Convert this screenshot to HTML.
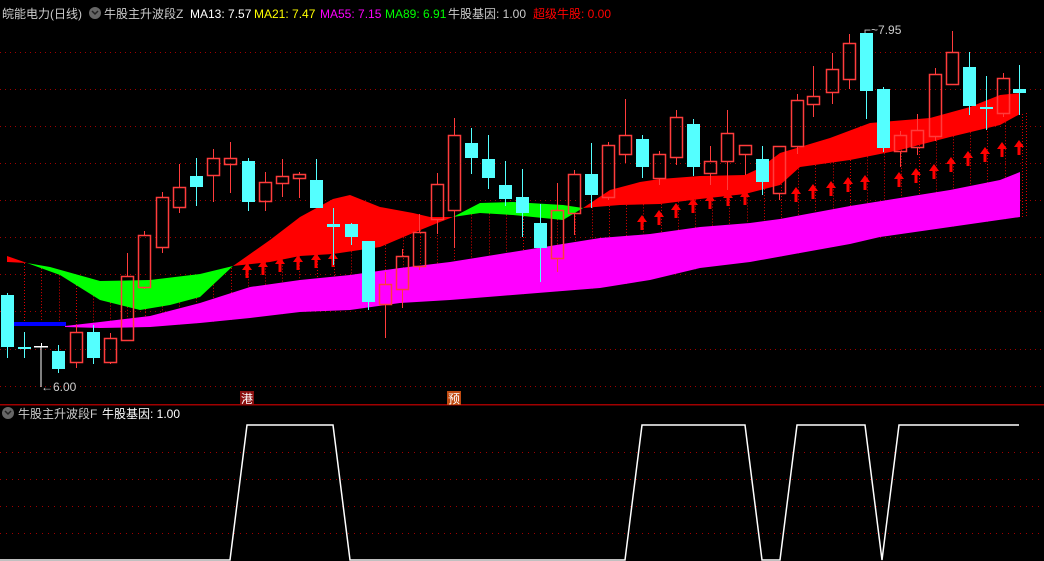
<!DOCTYPE html>
<html><head><meta charset="utf-8"><style>
html,body{margin:0;padding:0;background:#000;width:1044px;height:561px;overflow:hidden}
svg{position:absolute;left:0;top:0}
.t{font-family:"Liberation Sans","Noto Sans CJK SC",sans-serif;font-size:12px}
</style></head><body>
<svg id="s" width="1044" height="561" xmlns="http://www.w3.org/2000/svg">
<g id="grid"></g>
<g id="vd"></g>
<g id="bands"></g>
<g id="arrows"></g>
<g id="candles"></g>
<g id="low"></g>
<rect x="0" y="404" width="1044" height="1.5" fill="#a00000"/>
<rect x="240" y="391" width="14" height="14" fill="#8b1010"/>
<text x="241" y="403" class="t" fill="#fff" font-size="12">港</text>
<rect x="447" y="391" width="14" height="14" fill="#c04a10"/>
<text x="448" y="403" class="t" fill="#fff" font-size="12">预</text>
<line x1="41" y1="347" x2="41" y2="387" stroke="#fff" stroke-width="1"/>
<text x="41" y="391" class="t" fill="#ccc" font-size="12">←6.00</text>
<text x="864" y="34" class="t" fill="#ccc" font-size="12">⌐~7.95</text>
<circle cx="95" cy="13" r="6" fill="#666"/><path d="M92 11 L95 14 L98 11" stroke="#222" stroke-width="1.5" fill="none"/>
<text x="2" y="18" class="t" fill="#ccc">皖能电力(日线)</text>
<text x="104" y="18" class="t" fill="#ccc">牛股主升波段Z</text>
<text x="190" y="18" class="t" fill="#fff">MA13: 7.57</text>
<text x="254" y="18" class="t" fill="#ff0">MA21: 7.47</text>
<text x="320" y="18" class="t" fill="#f0f">MA55: 7.15</text>
<text x="385" y="18" class="t" fill="#0f0">MA89: 6.91</text>
<text x="448" y="18" class="t" fill="#ccc">牛股基因: 1.00</text>
<text x="533" y="18" class="t" fill="#f00">超级牛股: 0.00</text>
<circle cx="8" cy="413" r="6" fill="#666"/><path d="M5 411 L8 414 L11 411" stroke="#222" stroke-width="1.5" fill="none"/>
<text x="18" y="418" class="t" fill="#ccc">牛股主升波段F</text>
<text x="102" y="418" class="t" fill="#fff">牛股基因: 1.00</text>
</svg>
<script>
var NS="http://www.w3.org/2000/svg";
function el(g,tag,a){var e=document.createElementNS(NS,tag);for(var k in a)e.setAttribute(k,a[k]);document.getElementById(g).appendChild(e);return e;}
function interp(pts,x){for(var i=0;i<pts.length-1;i++){if(x>=pts[i][0]&&x<=pts[i+1][0]){var t=(x-pts[i][0])/(pts[i+1][0]-pts[i][0]);return pts[i][1]+t*(pts[i+1][1]-pts[i][1]);}}return x<pts[0][0]?pts[0][1]:pts[pts.length-1][1];}
function poly(g,top,bot,fill){var d="M";top.forEach(function(p,i){d+=(i?"L":"")+p[0]+" "+p[1]+" ";});bot.slice().reverse().forEach(function(p){d+="L"+p[0]+" "+p[1]+" ";});d+="Z";el(g,"path",{d:d,fill:fill});}
[52,89,126,163,200,237,274,311,349,386].forEach(function(y){el("grid","line",{x1:0,x2:1044,y1:y+.5,y2:y+.5,stroke:"#a00000","stroke-dasharray":"1 4"});});
[452,479,506,533].forEach(function(y){el("low","line",{x1:0,x2:1044,y1:y+.5,y2:y+.5,stroke:"#a00000","stroke-dasharray":"1 5"});});
var magT=[[65,326],[100,322],[150,316],[200,303],[250,287],[300,280],[350,275],[400,268],[450,262],[500,254],[550,246],[600,238],[650,234],[700,227],[750,223],[780,219],[850,206],[900,198],[950,190],[1000,180],[1020,172]];
var magB=[[65,327],[100,328],[150,327],[200,323],[250,318],[300,312],[350,310],[400,303],[450,300],[500,296],[550,292],[600,288],[650,280],[700,268],[750,262],[800,253],[850,244],[880,237],[950,227],[1020,217]];
var upA=[[27,263],[50,267],[100,281],[150,280],[200,274],[233,266],[270,262],[300,256],[333,254],[380,247],[413,233],[440,222],[453,217],[480,203],[513,202],[563,205],[583,208],[610,190],[640,182],[660,179],[700,176],[745,175],[760,168],[780,153],[830,138],[870,123],[930,118],[970,107],[1000,95],[1020,93]];
var upB=[[27,263],[60,275],[100,300],[140,310],[170,305],[200,297],[233,266],[270,240],[300,217],[333,199],[350,195],[380,207],[413,213],[430,217],[453,217],[480,213],[513,215],[563,220],[583,208],[620,205],[660,204],[700,199],[745,194],[780,185],[800,167],[850,160],[900,150],[950,137],[1000,125],[1020,114]];
for(var i=0;i<60;i++){var x=Math.round(7+i*17.2);if(x<20)continue;var y1=Math.max(interp(upA,x),interp(upB,x));var y2=x<65?325:interp(magB,x);el("vd","line",{x1:x+.5,x2:x+.5,y1:y1,y2:y2,stroke:"#e00000","stroke-dasharray":"1 2"});}
el("vd","line",{x1:1026.5,x2:1026.5,y1:113,y2:217,stroke:"#e00000","stroke-dasharray":"1 2"});
function seg(a,x0,x1){return a.filter(function(p){return p[0]>=x0&&p[0]<=x1;});}
poly("bands",[[7,256],[27,263]],[[7,262],[27,263]],"#f00");
poly("bands",seg(upA,27,233),seg(upB,27,233),"#0f0");
poly("bands",seg(upB,233,453),seg(upA,233,453),"#f00");
poly("bands",seg(upA,453,583),seg(upB,453,583),"#0f0");
poly("bands",seg(upA,583,1020),seg(upB,583,1020),"#f00");
poly("bands",magT,magB,"#f0f");
el("bands","rect",{x:14,y:322,width:52,height:4,fill:"#00f"});
var ar=[[247,263],[263,260],[280,257],[298,255],[316,253],[333,252],[642,215],[659,210],[676,203],[693,198],[710,194],[728,191],[745,190],[796,187],[813,184],[831,181],[848,177],[865,175],[899,172],[916,168],[934,164],[951,157],[968,151],[985,147],[1002,142],[1019,140]];
ar.forEach(function(a){var x=a[0],y=a[1];el("arrows","path",{d:"M"+x+" "+y+" L"+(x+5)+" "+(y+7)+" L"+(x+1.5)+" "+(y+7)+" L"+(x+1.5)+" "+(y+15)+" L"+(x-1.5)+" "+(y+15)+" L"+(x-1.5)+" "+(y+7)+" L"+(x-5)+" "+(y+7)+"Z",fill:"#f00"});});
var C=[[7,295,347,293,358,"c"],[24,347,349,332,358,"c"],[58,351,369,345,373,"c"],[76,332,362,325,368,"r"],[93,332,358,325,364,"c"],[110,338,362,333,364,"r"],[127,276,340,253,340,"r"],[144,235,287,231,289,"r"],[162,197,247,192,253,"r"],[179,187,207,164,213,"r"],[196,176,187,158,206,"c"],[213,158,175,149,202,"r"],[230,158,164,142,193,"r"],[248,161,202,158,211,"c"],[265,182,201,172,211,"r"],[282,176,183,159,197,"r"],[299,174,178,172,198,"r"],[316,180,208,159,208,"c"],[333,224,227,208,265,"c"],[351,224,237,223,245,"c"],[368,241,302,241,310,"c"],[385,284,304,272,338,"r"],[402,256,289,249,308,"r"],[419,232,266,214,270,"r"],[437,184,219,173,234,"r"],[454,135,210,118,248,"r"],[471,143,158,128,174,"c"],[488,159,178,135,189,"c"],[505,185,199,161,206,"c"],[522,197,213,169,237,"c"],[540,223,248,204,282,"c"],[557,210,258,183,272,"r"],[574,174,213,170,235,"r"],[591,174,195,143,208,"c"],[608,145,197,142,200,"r"],[625,135,154,99,163,"r"],[642,139,167,135,178,"c"],[659,154,178,151,185,"r"],[676,117,157,110,165,"r"],[693,124,167,119,176,"c"],[710,161,173,146,185,"r"],[727,133,161,110,190,"r"],[745,145,154,145,175,"r"],[762,159,182,146,195,"c"],[779,146,193,146,200,"r"],[797,100,146,94,154,"r"],[813,96,104,66,117,"r"],[832,69,92,53,104,"r"],[849,43,79,34,89,"r"],[866,33,91,33,119,"c"],[883,89,148,87,152,"c"],[900,135,151,131,167,"r"],[917,130,147,114,155,"r"],[935,74,136,68,141,"r"],[952,52,84,31,85,"r"],[969,67,106,52,115,"c"],[986,107,109,76,130,"c"],[1003,78,113,73,117,"r"],[1019,89,93,65,115,"c"]];
C.forEach(function(c){var x=c[0],col=c[5]=="c"?"#54ffff":"#ff3c3c";
 if(c[5]=="r"){el("candles","line",{x1:x+.5,x2:x+.5,y1:c[3],y2:c[1],stroke:col});el("candles","line",{x1:x+.5,x2:x+.5,y1:c[2],y2:c[4],stroke:col});el("candles","rect",{x:x-5.5,y:c[1]+.5,width:12,height:Math.max(1,c[2]-c[1]),fill:"none",stroke:col,"stroke-width":1.5});}
 else{el("candles","line",{x1:x+.5,x2:x+.5,y1:c[3],y2:c[4],stroke:col});el("candles","rect",{x:x-6,y:c[1],width:13,height:Math.max(2,c[2]-c[1]),fill:col});}
});
el("candles","rect",{x:34,y:346,width:14,height:1.5,fill:"#fff"});
el("candles","line",{x1:41.5,x2:41.5,y1:343,y2:347,stroke:"#fff"});
el("low","path",{d:"M0 560 L230 560 L247 425 L333 425 L350 560 L625 560 L642 425 L745 425 L762 560 L780 560 L797 425 L865 425 L882 560 L899 425 L1019 425",fill:"none",stroke:"#fff","stroke-width":1.5});
</script>
</body></html>
